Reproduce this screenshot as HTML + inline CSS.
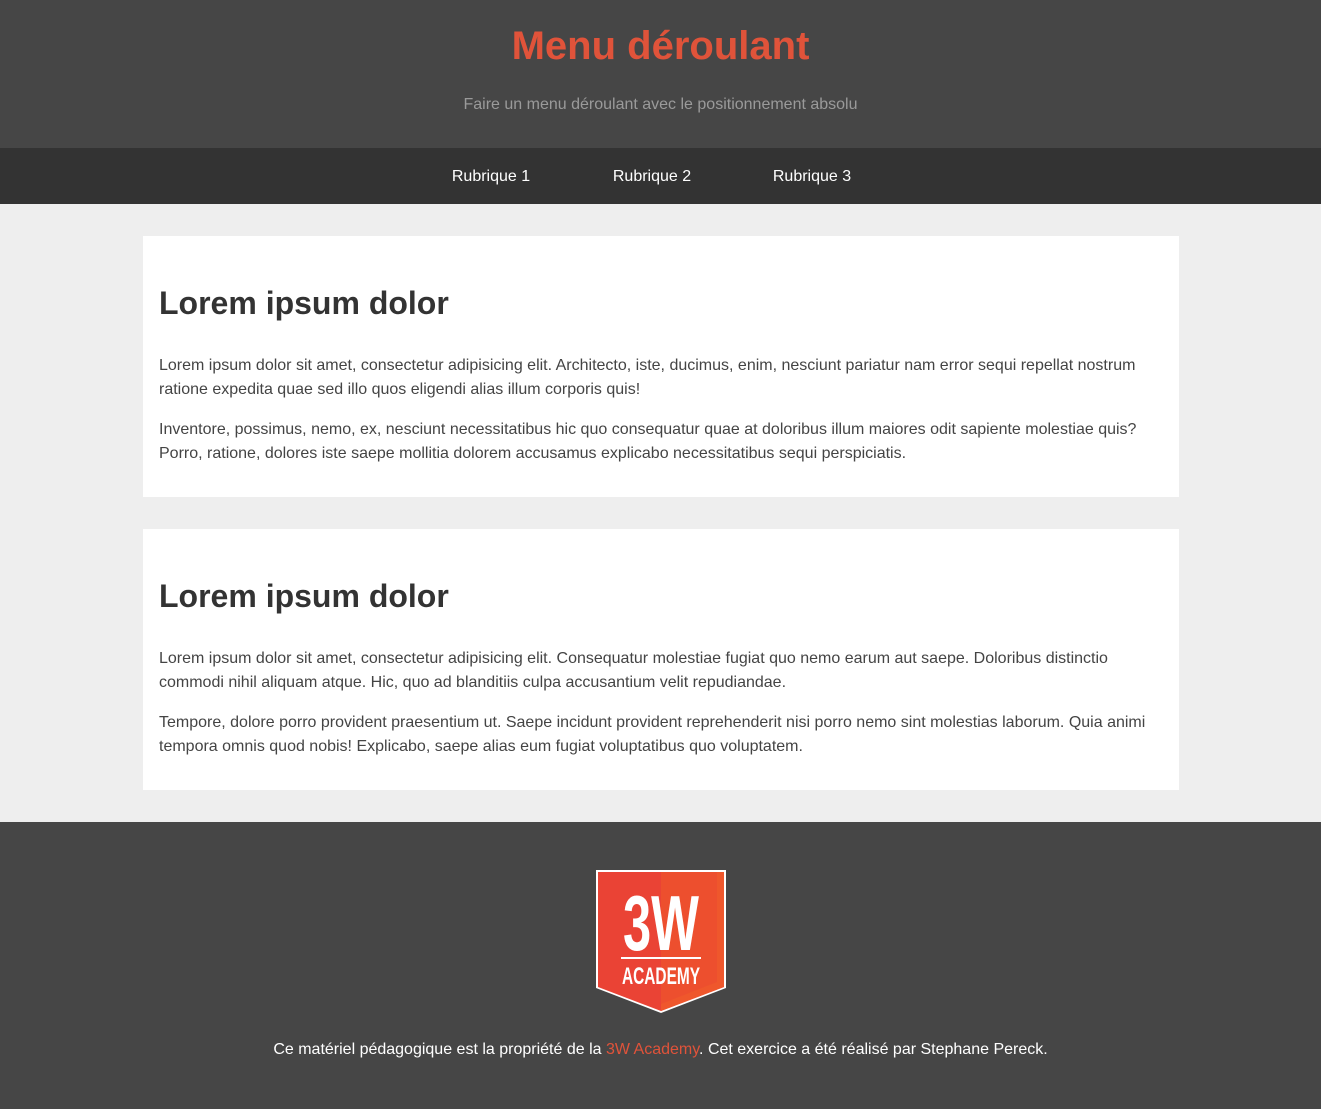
<!DOCTYPE html>
<html><head><meta charset="utf-8"><style>
*{margin:0;padding:0;box-sizing:border-box}
body{width:1321px;height:1109px;background:#eee;font-family:"Liberation Sans",Arial,sans-serif;overflow:hidden}
header{height:148px;background:#464646;text-align:center;position:relative}
header h1{position:absolute;top:22px;left:0;right:0;font-size:40px;color:#e0533a;font-weight:bold;line-height:48px}
header p{position:absolute;top:95px;left:0;right:0;font-size:16px;color:#9a9a9a;line-height:20px}
nav{height:56px;background:#333;position:relative}
nav a{position:absolute;top:19px;width:160px;margin-left:-80px;text-align:center;color:#fff;font-size:16px;line-height:20px;text-decoration:none}
.card{position:absolute;left:143px;width:1036px;height:261px;background:#fff;padding:0 16px}
.card h2{position:absolute;top:47px;left:16px;font-size:32px;color:#333;line-height:40px}
.card .t{position:absolute;top:118px;left:16px;right:30px;font-size:16px;line-height:24px;color:#444}
.card .t p{margin-bottom:16px}
footer{position:absolute;top:822px;left:0;width:1321px;height:287px;background:#464646}
footer p{position:absolute;top:218px;left:0;right:0;text-align:center;color:#fff;font-size:16px;line-height:20px}
footer p span{color:#e0533a}
</style></head><body>
<header><h1>Menu déroulant</h1><p>Faire un menu déroulant avec le positionnement absolu</p></header>
<nav><a style="left:491px">Rubrique 1</a><a style="left:652px">Rubrique 2</a><a style="left:812px">Rubrique 3</a></nav>
<div class="card" style="top:236px"><h2>Lorem ipsum dolor</h2><div class="t"><p>Lorem ipsum dolor sit amet, consectetur adipisicing elit. Architecto, iste, ducimus, enim, nesciunt pariatur nam error sequi repellat nostrum ratione expedita quae sed illo quos eligendi alias illum corporis quis!</p><p>Inventore, possimus, nemo, ex, nesciunt necessitatibus hic quo consequatur quae at doloribus illum maiores odit sapiente molestiae quis? Porro, ratione, dolores iste saepe mollitia dolorem accusamus explicabo necessitatibus sequi perspiciatis.</p></div></div>
<div class="card" style="top:529px"><h2>Lorem ipsum dolor</h2><div class="t"><p>Lorem ipsum dolor sit amet, consectetur adipisicing elit. Consequatur molestiae fugiat quo nemo earum aut saepe. Doloribus distinctio commodi nihil aliquam atque. Hic, quo ad blanditiis culpa accusantium velit repudiandae.</p><p>Tempore, dolore porro provident praesentium ut. Saepe incidunt provident reprehenderit nisi porro nemo sint molestias laborum. Quia animi tempora omnis quod nobis! Explicabo, saepe alias eum fugiat voluptatibus quo voluptatem.</p></div></div>
<footer>
<svg style="position:absolute;left:595px;top:47px" width="132" height="145" viewBox="0 0 132 145">
<path d="M1 1H131V119L66 144L1 119Z" fill="#fff"/>
<path d="M3 3H129V118L66 142L3 118Z" fill="#ea4335"/>
<path d="M66 3H129V118L66 142Z" fill="#ef5a2b" opacity=".9"/>
<path d="M66 3H122V113L66 135Z" fill="#ea4335" opacity=".35"/>
<text x="66" y="81" text-anchor="middle" fill="#fff" font-family="Liberation Sans Narrow,Liberation Sans,sans-serif" font-weight="bold" font-size="78" textLength="76" lengthAdjust="spacingAndGlyphs">3W</text>
<rect x="26" y="88" width="80" height="2" fill="#fff"/>
<text x="66" y="115" text-anchor="middle" fill="#fff" font-family="Liberation Sans Narrow,Liberation Sans,sans-serif" font-weight="bold" font-size="24" textLength="78" lengthAdjust="spacingAndGlyphs">ACADEMY</text>
</svg>
<p>Ce matériel pédagogique est la propriété de la <span>3W Academy</span>. Cet exercice a été réalisé par Stephane Pereck.</p>
</footer>
</body></html>
